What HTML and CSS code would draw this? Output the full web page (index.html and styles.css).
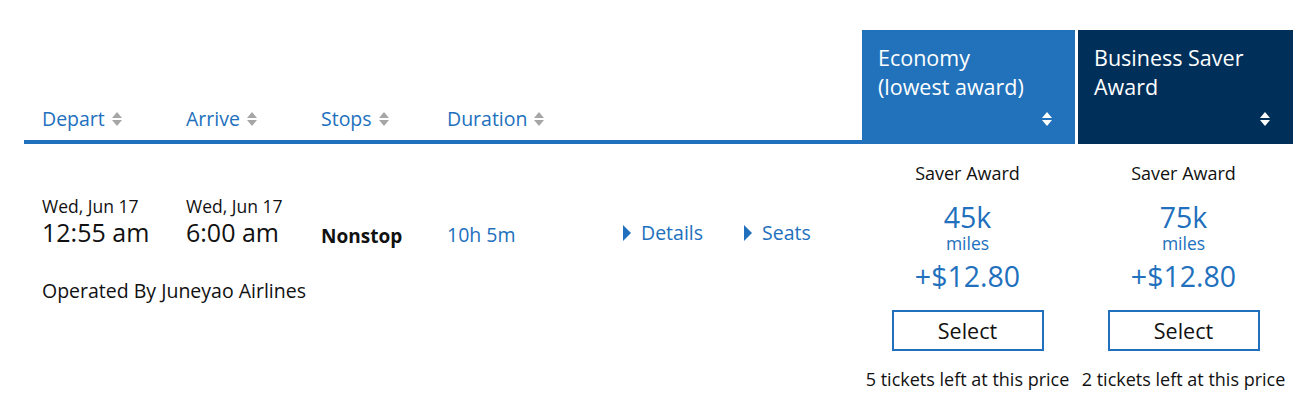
FILE: index.html
```html
<!DOCTYPE html>
<html>
<head>
<meta charset="utf-8">
<link rel="stylesheet" href="styles.css">
</head>
<body>
<div class="results">
  <div class="head">
    <div class="head-left">
      <div class="hcell c-depart">Depart <span class="sort gray"></span></div>
      <div class="hcell c-arrive">Arrive <span class="sort gray"></span></div>
      <div class="hcell c-stops">Stops <span class="sort gray"></span></div>
      <div class="hcell c-duration">Duration <span class="sort gray"></span></div>
    </div>
    <div class="fare-head economy">
      <div class="fare-title">Economy<br>(lowest award)</div>
      <span class="sort white"></span>
    </div>
    <div class="fare-head business">
      <div class="fare-title">Business Saver<br>Award</div>
      <span class="sort white"></span>
    </div>
  </div>
  <div class="row">
    <div class="row-left">
      <div class="flight">
        <div class="cell c-depart">
          <div class="date">Wed, Jun 17</div>
          <div class="time">12:55 am</div>
        </div>
        <div class="cell c-arrive">
          <div class="date">Wed, Jun 17</div>
          <div class="time">6:00 am</div>
        </div>
        <div class="cell c-stops"><div class="stops">Nonstop</div></div>
        <div class="cell c-duration"><div class="duration">10h 5m</div></div>
        <div class="cell c-details"><a class="toggle">Details</a></div>
        <div class="cell c-seats"><a class="toggle">Seats</a></div>
      </div>
      <div class="operated">Operated By Juneyao Airlines</div>
    </div>
    <div class="fare economy-col">
      <div class="award">Saver Award</div>
      <div class="miles">45k</div>
      <div class="miles-label">miles</div>
      <div class="price">+$12.80</div>
      <button class="select">Select</button>
      <div class="left">5 tickets left at this price</div>
    </div>
    <div class="fare business-col">
      <div class="award">Saver Award</div>
      <div class="miles">75k</div>
      <div class="miles-label">miles</div>
      <div class="price">+$12.80</div>
      <button class="select">Select</button>
      <div class="left">2 tickets left at this price</div>
    </div>
  </div>
</div>
</body>
</html>
```
FILE: styles.css
```css
* { box-sizing: border-box; }
body {
  margin: 0;
  background: #fff;
  font-family: "Open Sans", "Noto Sans", sans-serif;
  color: #111;
}
.results {
  padding: 30px 0 0 24px;
  width: 1294px;
}
.head {
  display: flex;
  align-items: stretch;
}
.head-left {
  width: 838px;
  height: 114px;
  border-bottom: 4px solid #2170bd;
  display: flex;
  align-items: flex-end;
  padding: 0 0 9px 18px;
}
.hcell {
  font-size: 19.5px;
  line-height: 24px;
  color: #2170bd;
  display: flex;
  align-items: center;
}
.c-depart { width: 144px; }
.c-arrive { width: 135px; }
.c-stops { width: 126px; }
.c-duration { width: 176px; }
.c-details { width: 121px; }
.c-seats { width: 100px; }
.sort {
  display: inline-flex;
  flex-direction: column;
  gap: 2px;
  margin-left: 7px;
  width: 10px;
}
.sort::before, .sort::after {
  content: "";
  display: block;
  width: 0;
  height: 0;
  border-left: 5px solid transparent;
  border-right: 5px solid transparent;
}
.sort::before { border-bottom: 6px solid currentColor; }
.sort::after { border-top: 6px solid currentColor; }
.sort.gray { color: #a6a6a6; }
.sort.white { color: #fff; }
.fare-head {
  height: 114px;
  color: #fff;
  padding: 13px 23px 0 16px;
  display: flex;
  flex-direction: column;
}
.fare-head .sort {
  align-self: flex-end;
  margin-top: 11px;
}
.fare-title {
  font-size: 21.5px;
  line-height: 29px;
}
.economy {
  width: 213px;
  background: #2172bb;
}
.business {
  width: 215px;
  margin-left: 3px;
  background: #002f5a;
}
.row {
  display: flex;
}
.row-left {
  width: 838px;
  padding: 51px 0 0 18px;
}
.flight {
  display: flex;
}
.date {
  font-size: 17.5px;
  line-height: 22px;
}
.time {
  font-size: 25px;
  line-height: 30px;
}
.stops {
  font-weight: bold;
  font-size: 19px;
  line-height: 24px;
  padding-top: 29px;
}
.duration {
  font-size: 19.5px;
  line-height: 24px;
  color: #2170bd;
  padding-top: 28px;
}
.toggle {
  display: inline-flex;
  align-items: center;
  font-size: 19.5px;
  line-height: 24px;
  color: #2170bd;
  padding-top: 26px;
}
.toggle::before {
  content: "";
  width: 0;
  height: 0;
  border-top: 8px solid transparent;
  border-bottom: 8px solid transparent;
  border-left: 8px solid #2170bd;
  margin-right: 10px;
}
.operated {
  font-size: 19.5px;
  line-height: 24px;
  margin-top: 31px;
}
.fare {
  display: flex;
  flex-direction: column;
  align-items: center;
  padding-top: 17px;
  text-align: center;
}
.economy-col { width: 211px; }
.business-col { width: 211px; margin-left: 5px; }
.award {
  font-size: 18px;
  line-height: 24px;
  color: #111;
}
.miles {
  font-size: 28.5px;
  line-height: 30px;
  color: #2170bd;
  margin-top: 17px;
}
.miles-label {
  font-size: 17.5px;
  line-height: 22px;
  color: #2170bd;
}
.price {
  font-size: 28.5px;
  line-height: 32px;
  color: #2170bd;
  margin-top: 6px;
}
.select {
  margin-top: 18px;
  width: 152px;
  height: 41px;
  border: 2px solid #2170bd;
  background: #fff;
  font-family: inherit;
  font-size: 21.5px;
  color: #111;
  padding: 0;
}
.left {
  font-size: 18px;
  line-height: 24px;
  margin-top: 16px;
  white-space: nowrap;
}
```
